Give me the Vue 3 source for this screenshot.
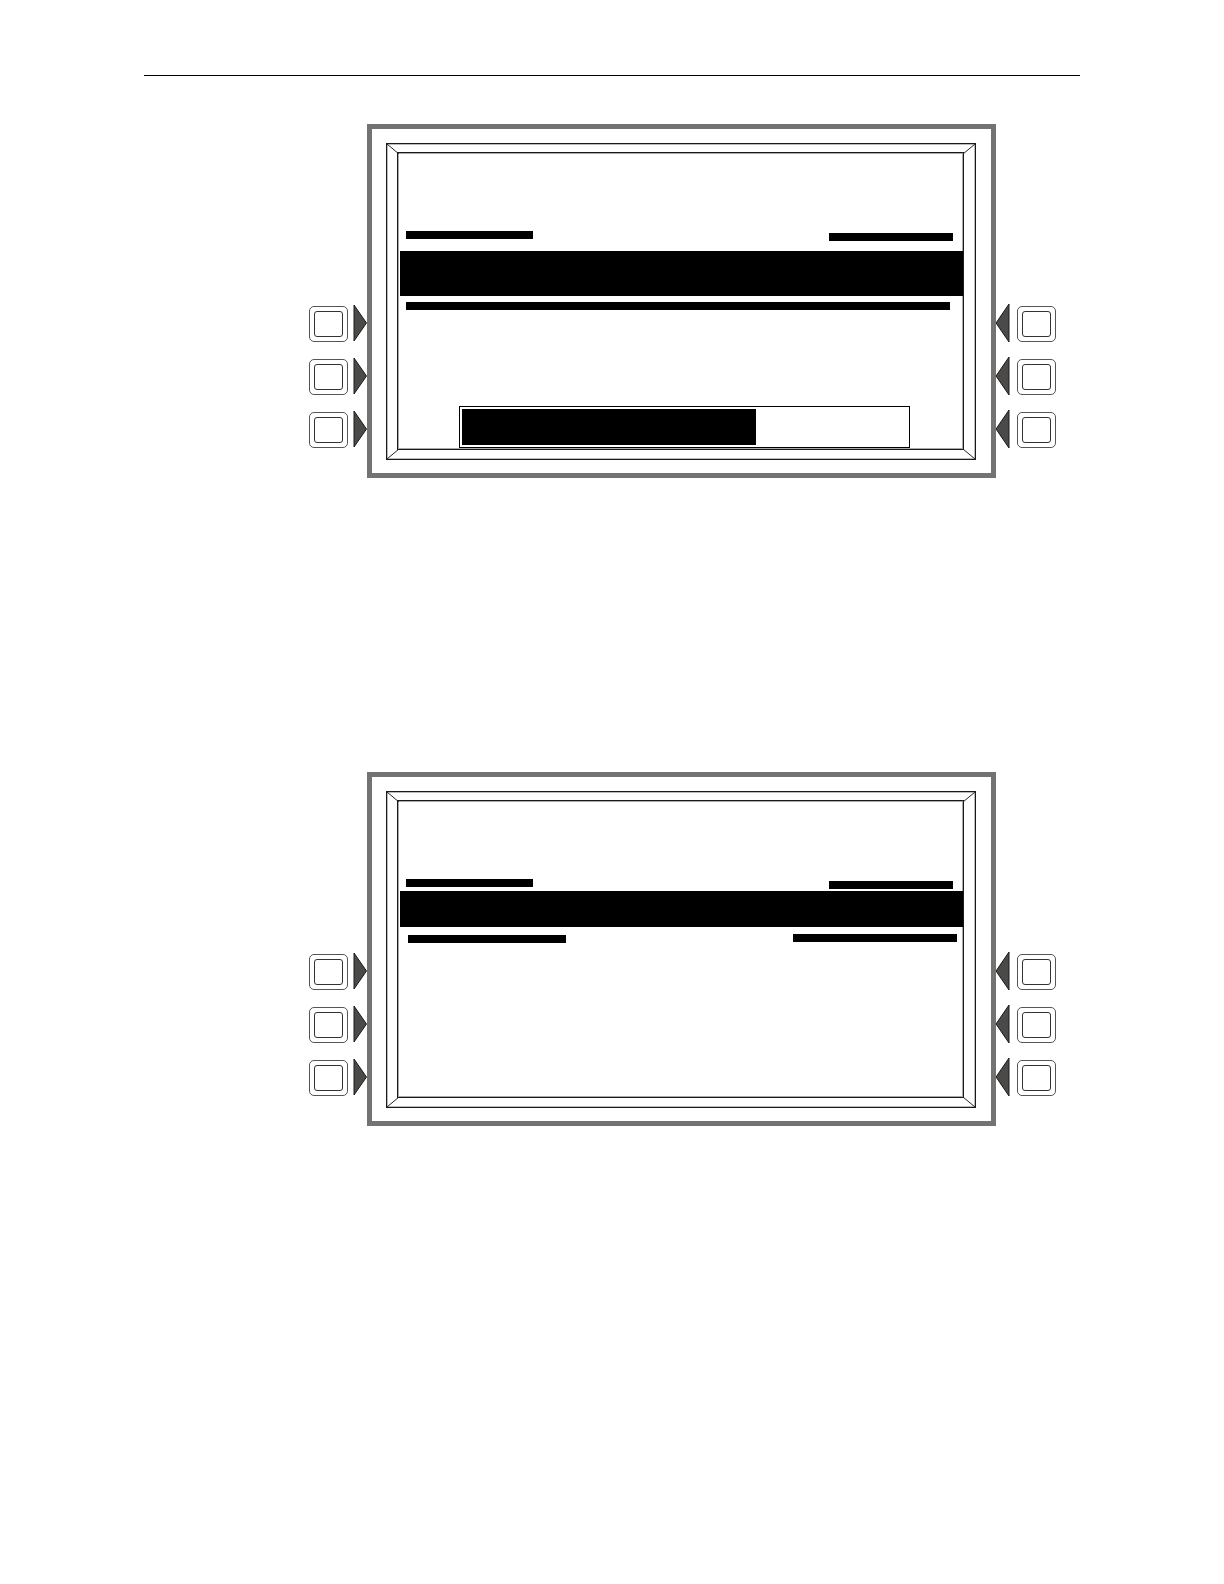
<template>
  <main class="page">
    <hr class="page-rule" />

    <section v-for="panel in panels" :key="panel.id" class="panel" :aria-label="panel.name">
      <!-- Left softkeys -->
      <div class="keys">
        <div v-for="n in 3" :key="n" class="key-row">
          <button type="button" class="key" :aria-label="`Left key ${n}`">
            <span class="key-cap"></span>
          </button>
          <svg class="arrow" viewBox="0 0 14 38" aria-hidden="true">
            <path d="M1 1 L13.5 19 L1 37 Z" />
          </svg>
        </div>
      </div>

      <!-- Display -->
      <div class="frame">
        <div class="bezel">
          <svg class="corner top-left" viewBox="0 0 12 10" aria-hidden="true"><path d="M0 0 L12 10" /></svg>
          <svg class="corner top-right" viewBox="0 0 12 10" aria-hidden="true"><path d="M12 0 L0 10" /></svg>
          <svg class="corner bottom-left" viewBox="0 0 12 10" aria-hidden="true"><path d="M0 10 L12 0" /></svg>
          <svg class="corner bottom-right" viewBox="0 0 12 10" aria-hidden="true"><path d="M12 10 L0 0" /></svg>

          <div class="screen">
            <div class="bar-row header-row">
              <div class="bar header-start"></div>
              <div class="bar header-end"></div>
            </div>

            <template v-if="panel.id === 'progress'">
              <div class="band tall"></div>
              <div class="bar full"></div>
              <progress class="progress" :value="panel.value" max="100" aria-label="Progress"></progress>
            </template>

            <template v-else>
              <div class="band"></div>
              <div class="bar-row option-row">
                <div class="bar option-start"></div>
                <div class="bar option-end"></div>
              </div>
            </template>
          </div>
        </div>
      </div>

      <!-- Right softkeys -->
      <div class="keys">
        <div v-for="n in 3" :key="n" class="key-row right">
          <svg class="arrow" viewBox="0 0 14 38" aria-hidden="true">
            <path d="M13 0 L0 19 L13 38 Z" />
          </svg>
          <button type="button" class="key" :aria-label="`Right key ${n}`">
            <span class="key-cap"></span>
          </button>
        </div>
      </div>
    </section>
  </main>
</template>

<script setup>
const panels = [
  { id: 'progress', name: 'Progress display', value: 66 },
  { id: 'options', name: 'Options display' }
];
</script>

<style>
body {
  background: #fff;
}
</style>

<style scoped>
.page {
  padding: 75px 144px 0;
  font-family: "Liberation Sans", Arial, sans-serif;
}

.page-rule {
  height: 1px;
  margin: 0 0 48px;
  border: none;
  background: #000;
}

.panel {
  display: flex;
  margin: 0 24px 294px 165px;
}

/* Softkeys */
.keys {
  display: flex;
  flex-direction: column;
  gap: 15px;
  padding-top: 180px;
}

.key-row {
  display: flex;
  align-items: flex-end;
  gap: 5px;
}

.key-row.right {
  gap: 7px;
}

.key {
  display: flex;
  box-sizing: border-box;
  width: 39px;
  height: 36px;
  padding: 4px;
  background: #fff;
  border: 1px solid #555;
  border-radius: 5px;
  cursor: pointer;
}

.key-cap {
  flex: 1;
  border: 1px solid #333;
  border-radius: 3px;
}

.arrow {
  display: block;
  width: 14px;
  height: 38px;
}

.arrow path {
  fill: #4b4a48;
  stroke: #1a1a1a;
  stroke-width: 1;
}

/* Display frame */
.frame {
  flex: 1;
  display: flex;
  box-sizing: border-box;
  min-height: 354px;
  padding: 14px 15px 13px 14px;
  border: 5px solid #737373;
}

.bezel {
  position: relative;
  flex: 1;
  display: flex;
  padding: 8px 11px 9px 10px;
  border: 1px solid #1a1a1a;
  box-shadow: inset 0 0 0 1px #bbb;
}

.corner {
  position: absolute;
  width: 12px;
  height: 10px;
}

.corner path {
  fill: none;
  stroke: #222;
  stroke-width: 1;
}

.top-left {
  top: 0;
  left: 0;
}

.top-right {
  top: 0;
  right: 0;
}

.bottom-left {
  bottom: 0;
  left: 0;
}

.bottom-right {
  right: 0;
  bottom: 0;
}

.screen {
  flex: 1;
  display: flex;
  flex-direction: column;
  padding-top: 78px;
  border: 1px solid #1a1a1a;
  box-shadow: inset 0 0 0 1px #aaa;
}

/* Screen content */
.bar-row {
  display: flex;
  justify-content: space-between;
}

.bar {
  height: 8px;
  background: #000;
}

.header-row {
  padding: 0 10px 0 8px;
}

.header-start {
  width: 127px;
}

.header-end {
  width: 124px;
  margin-top: 2px;
}

.band {
  height: 36px;
  margin: 2px 0 7px 2px;
  background: #000;
}

.band.tall {
  height: 45px;
  margin: 10px 0 6px 2px;
}

.bar.full {
  margin: 0 13px 0 8px;
}

.option-row {
  padding: 0 6px 0 10px;
}

.option-start {
  width: 158px;
  margin-top: 1px;
}

.option-end {
  width: 164px;
}

.progress {
  appearance: none;
  display: block;
  box-sizing: border-box;
  width: auto;
  height: 42px;
  margin: auto 53px 1px 61px;
  padding: 2px;
  background: #fff;
  border: 1px solid #000;
}

.progress::-webkit-progress-bar {
  background: #fff;
}

.progress::-webkit-progress-value {
  background: #000;
}
</style>
